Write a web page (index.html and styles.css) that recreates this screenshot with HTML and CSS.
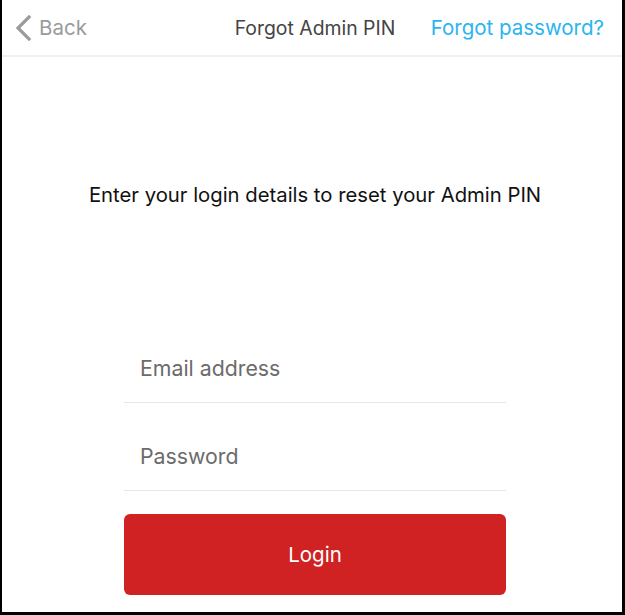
FILE: index.html
```html
<!doctype html>
<html lang="en">
<head>
  <meta charset="utf-8" />
  <meta name="viewport" content="width=device-width,initial-scale=1" />
  <title>Forgot Admin PIN</title>
  <link rel="stylesheet" href="styles.css">
</head>
<body>
  <div class="screen">
    <header class="bar">
      <a class="back" href="#">
        <svg width="18" height="26" viewBox="0 0 18 26" aria-hidden="true">
          <path d="M15 2 L4 13 L15 24" fill="none" stroke="#9b9b9b" stroke-width="3.2" stroke-linecap="square"/>
        </svg>
        <span>Back</span>
      </a>
      <h1>Forgot Admin PIN</h1>
      <a class="link" href="#">Forgot password?</a>
    </header>

    <main class="content">
      <p class="intro">Enter your login details to reset your Admin PIN</p>

      <form class="form">
        <input class="field" type="email" placeholder="Email address" />
        <input class="field" type="password" placeholder="Password" />
        <button type="button" class="btn">Login</button>
      </form>
    </main>
  </div>
</body>
</html>
```

FILE: styles.css
```css
html, body { margin:0; height:100%; }
body { background:#000; font-family: Inter, "Liberation Sans", Arial, sans-serif; }

.screen { margin:0 3px 0 2px; height:612px; background:#fff; display:flex; flex-direction:column; }

.bar { height:55px; border-bottom:2px solid #efefef; display:grid; grid-template-columns:1fr auto 1fr; align-items:center; padding:0 18px 0 12px; }
.back { display:flex; align-items:center; gap:7px; color:#9b9b9b; text-decoration:none; font-size:20.5px; }
.back svg { display:block; margin-top:1px; }
.bar h1 { margin:0; font-size:19.4px; font-weight:400; color:#444; padding-left:12px; }
.link { justify-self:end; color:#2bb5ee; text-decoration:none; font-size:20.5px; }

.content { padding-left:6px; display:flex; flex-direction:column; align-items:center; }
.intro { margin:126px 0 0; font-size:20.3px; line-height:24px; color:#111; }

.form { width:382px; margin-top:127px; display:flex; flex-direction:column; }
.field { height:68px; border:none; border-bottom:1px solid #e6e6e6; padding:0 16px; font:inherit; font-size:21.3px; color:#333; outline:0; background:transparent; }
.field + .field { margin-top:19px; }
.field::placeholder { color:#6b6b6b; }
.btn { margin-top:23px; height:81px; border:none; border-radius:6px; background:#d02222; color:#fff; font:inherit; font-size:20.5px; cursor:pointer; }
```
